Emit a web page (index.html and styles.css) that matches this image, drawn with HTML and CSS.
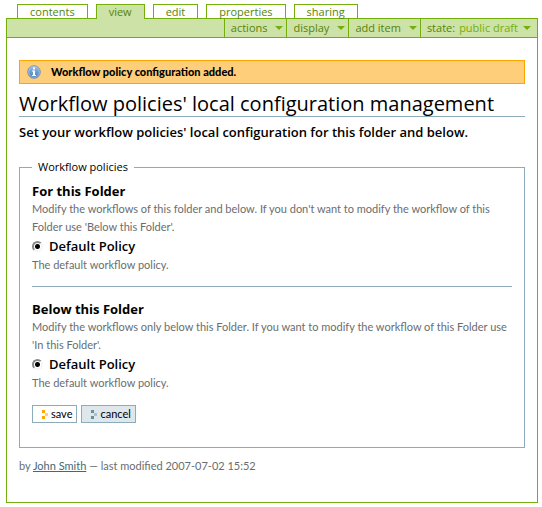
FILE: index.html
```html
<!DOCTYPE html>
<html lang="en">
<head>
<meta charset="utf-8">
<title>Workflow policies' local configuration management</title>
<link rel="stylesheet" href="styles.css">
</head>
<body>
<nav class="tabs">
  <a href="#contents">contents</a>
  <a href="#view" class="selected">view</a>
  <a href="#edit">edit</a>
  <a href="#properties">properties</a>
  <a href="#sharing">sharing</a>
</nav>
<main class="panel">
  <div class="actions">
    <button type="button">actions <i class="arrow"></i></button>
    <button type="button">display <i class="arrow"></i></button>
    <button type="button">add item <i class="arrow"></i></button>
    <button type="button" class="state">state: <span>public draft</span> <i class="arrow"></i></button>
  </div>
  <div class="content">
    <div class="message" role="status">
      <svg class="info" viewBox="0 0 14 14" aria-hidden="true">
        <defs><linearGradient id="blue" x1="0" y1="0" x2="0" y2="1"><stop offset="0" stop-color="#9cc0e6"/><stop offset="1" stop-color="#3f78bd"/></linearGradient></defs>
        <circle cx="7" cy="7" r="6.3" fill="url(#blue)" stroke="#8297ad" stroke-width="1"/>
        <circle cx="7" cy="7" r="5.3" fill="none" stroke="#b5d0ec" stroke-width=".6"/>
        <path d="M6 2.500h2v2H6zM5 5.500h3v4.500h1v1H5v-1h1V6.500H5z" fill="#fff"/>
      </svg>
      <span>Workflow policy configuration added.</span>
    </div>
    <h1>Workflow policies' local configuration management</h1>
    <p class="description">Set your workflow policies' local configuration for this folder and below.</p>
    <form>
      <fieldset>
        <legend>Workflow policies</legend>
        <section>
          <h2>For this Folder</h2>
          <p>Modify the workflows of this folder and below. If you don't want to modify the workflow of this Folder use 'Below this Folder'.</p>
          <div class="option"><input type="radio" id="in" name="in" checked><label for="in">Default Policy</label></div>
          <p>The default workflow policy.</p>
        </section>
        <hr>
        <section>
          <h2>Below this Folder</h2>
          <p>Modify the workflows only below this Folder. If you want to modify the workflow of this Folder use 'In this Folder'.</p>
          <div class="option"><input type="radio" id="below" name="below" checked><label for="below">Default Policy</label></div>
          <p>The default workflow policy.</p>
        </section>
        <div class="buttons">
          <button type="button" class="save"><svg viewBox="0 0 6 9" aria-hidden="true"><path d="M0 0h3v3H0zM0 6h3v3H0z" fill="#ffa500"/><path d="M3 3h3v3H3z" fill="#ffce7b"/></svg>save</button>
          <button type="button" class="cancel"><svg viewBox="0 0 6 9" aria-hidden="true"><path d="M0 0h3v3H0zM0 6h3v3H0z" fill="#65919a"/><path d="M3 3h3v3H3z" fill="#aac2ca"/></svg>cancel</button>
        </div>
      </fieldset>
    </form>
    <div class="byline">by <a href="#author">John Smith</a> — last modified 2007-07-02 15:52</div>
  </div>
</main>
</body>
</html>
```
FILE: styles.css
```css
* { box-sizing: border-box; }
body {
  margin: 0;
  padding: 4px 4px 4px 6px;
  background: #fff;
  color: #000;
  font: 11px/18px "Open Sans", "Lucida Grande", sans-serif;
}
h1, h2, p { margin: 0; }
button { font: inherit; margin: 0; }
.tabs {
  display: flex;
  gap: 8px;
  padding-left: 11px;
}
.tabs a {
  height: 14px;
  padding: 0 12px;
  border: 1px solid #74ae0b;
  border-bottom: 0;
  color: #578308;
  font-size: 11px;
  line-height: 14px;
  text-decoration: none;
}
.tabs .selected { background: #cde2a7; height: 15px; margin-bottom: -1px; position: relative; }
.panel { border: 1px solid #74ae0b; }
.actions {
  display: flex;
  justify-content: flex-end;
  height: 19px;
  background: #cde2a7;
  border-bottom: 1px solid #74ae0b;
}
.actions button {
  display: flex;
  align-items: center;
  padding: 0 3px 0 6px;
  border: 0;
  border-left: 1px solid #74ae0b;
  background: transparent;
  color: #578308;
  line-height: 18px;
}
.actions .state { padding-right: 6px; }
.state span { color: #74ae0b; margin-left: 4px; }
.arrow {
  margin-left: 8px;
  border: 4px solid transparent;
  border-top-color: #74ae0b;
  border-bottom: 0;
}
.state .arrow { margin-left: 5px; }
.content { padding: 22px 12px 27px; }
.message {
  display: flex;
  align-items: center;
  gap: 10px;
  height: 24px;
  padding: 0 7px;
  border: 1px solid #ffa500;
  background: #ffce7b;
  font-family: Lato, sans-serif;
  font-weight: 900;
}
.info { width: 14px; height: 14px; }
h1 {
  margin-top: 8px;
  border-bottom: 1px solid #8cacbb;
  font-size: 20px;
  font-weight: 400;
  line-height: 24px;
}
.description { margin: 6px 0 17px; font-size: 13px; font-weight: 600; }
fieldset {
  margin: 0;
  padding: 6px 12px 24px;
  border: 1px solid #8cacbb;
}
legend { padding: 0 6px; line-height: 18px; }
h2 { font-size: 13px; line-height: 18px; }
section p { color: #6a6d70; font-family: Lato, sans-serif; }
.option {
  display: flex;
  align-items: center;
  gap: 6px;
  height: 20px;
  font-size: 13px;
  font-weight: 600;
}
.option input {
  appearance: none;
  width: 11px;
  height: 11px;
  margin: 0;
  border: 2px solid;
  border-color: #888 #f6f6f6 #f6f6f6 #888;
  border-radius: 50%;
  background: radial-gradient(circle, #000 2px, #fff 3px);
}
hr { height: 1px; margin: 12px 0 13px; border: 0; background: #8cacbb; }
.buttons { display: flex; gap: 4px; margin-top: 13px; }
.buttons button {
  display: flex;
  align-items: center;
  gap: 3px;
  height: 18px;
  padding: 0 4px 0 9px;
  border: 1px solid #8cacbb;
  background: #fff;
  color: #000;
  font-family: Lato, sans-serif;
}
.buttons .cancel { background: #dee7ec; }
.buttons svg { width: 6px; height: 9px; }
.byline { margin-top: 9px; color: #6a6d70; font-family: Lato, sans-serif; }
.byline a { color: #436976; }
```
